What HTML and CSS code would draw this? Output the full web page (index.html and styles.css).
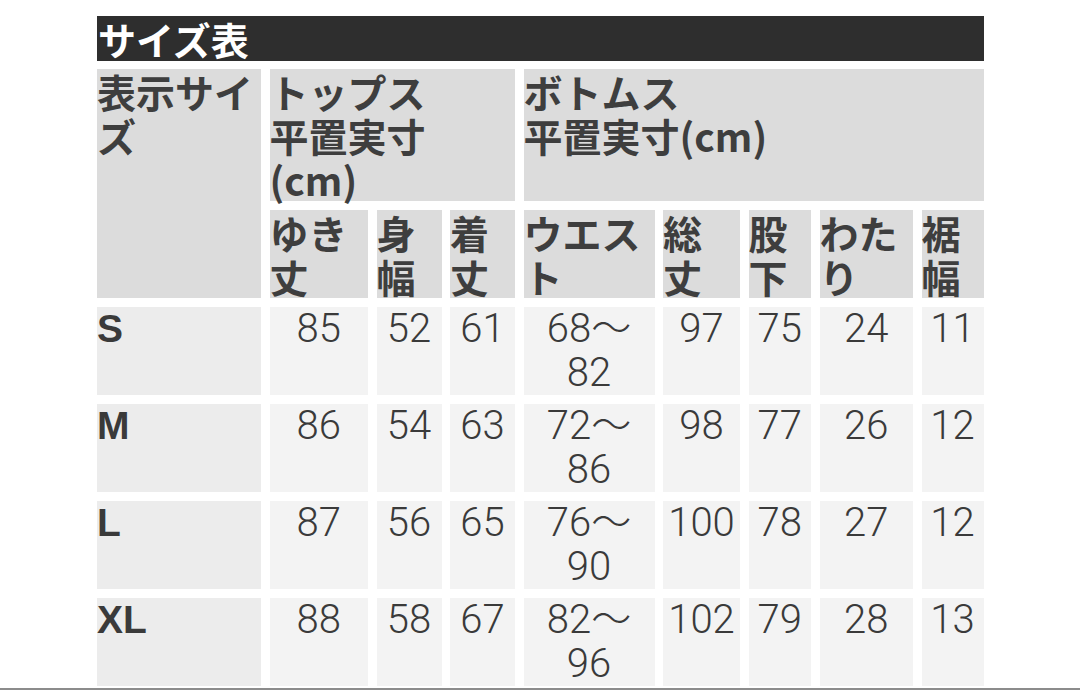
FILE: index.html
```html
<!DOCTYPE html>
<html lang="ja">
<head>
<meta charset="utf-8">
<title>サイズ表</title>
<link rel="stylesheet" href="styles.css">
</head>
<body>
<div class="page">
  <h2 class="title">サイズ表</h2>
  <div class="chart">
    <div class="cell head size-head">表示サイズ</div>
    <div class="cell head tops-head">トップス<br>平置実寸<br>(cm)</div>
    <div class="cell head bottoms-head">ボトムス<br>平置実寸(cm)</div>

    <div class="cell head">ゆき丈</div>
    <div class="cell head">身幅</div>
    <div class="cell head">着丈</div>
    <div class="cell head">ウエスト</div>
    <div class="cell head">総丈</div>
    <div class="cell head">股下</div>
    <div class="cell head">わたり</div>
    <div class="cell head">裾幅</div>

    <div class="cell size">S</div>
    <div class="cell num">85</div>
    <div class="cell num">52</div>
    <div class="cell num">61</div>
    <div class="cell num">68〜<br>82</div>
    <div class="cell num">97</div>
    <div class="cell num">75</div>
    <div class="cell num">24</div>
    <div class="cell num">11</div>

    <div class="cell size">M</div>
    <div class="cell num">86</div>
    <div class="cell num">54</div>
    <div class="cell num">63</div>
    <div class="cell num">72〜<br>86</div>
    <div class="cell num">98</div>
    <div class="cell num">77</div>
    <div class="cell num">26</div>
    <div class="cell num">12</div>

    <div class="cell size">L</div>
    <div class="cell num">87</div>
    <div class="cell num">56</div>
    <div class="cell num">65</div>
    <div class="cell num">76〜<br>90</div>
    <div class="cell num">100</div>
    <div class="cell num">78</div>
    <div class="cell num">27</div>
    <div class="cell num">12</div>

    <div class="cell size">XL</div>
    <div class="cell num">88</div>
    <div class="cell num">58</div>
    <div class="cell num">67</div>
    <div class="cell num">82〜<br>96</div>
    <div class="cell num">102</div>
    <div class="cell num">79</div>
    <div class="cell num">28</div>
    <div class="cell num">13</div>
  </div>
</div>
<div class="bottom-rule"></div>
</body>
</html>
```

FILE: styles.css
```css
html, body {
  margin: 0;
  padding: 0;
  background: #ffffff;
}

body {
  font-family: "Noto Sans CJK JP", "Noto Sans", sans-serif;
  color: #3c3c3c;
  width: 1080px;
  height: 690px;
  overflow: hidden;
}

.page {
  padding: 16px 0 0 97px;
  width: 887px;
}

.title {
  margin: 0 0 8px 0;
  height: 45px;
  background: #2e2e2e;
  color: #ffffff;
  font-size: 38px;
  font-weight: 700;
  line-height: 45px;
  padding-left: 1px;
}

.chart {
  display: grid;
  grid-template-columns: 164px 98.5px 65px 65px 131px 77px 62.5px 93.5px 62px;
  grid-template-rows: 132px repeat(5, 88px);
  column-gap: 8.5px;
  row-gap: 9px;
  font-size: 39px;
  line-height: 44px;
}

.head {
  background: #dcdcdc;
  font-weight: 700;
  color: #3e3e3e;
}

.size-head {
  grid-row: span 2;
}

.tops-head {
  grid-column: span 3;
}

.bottoms-head {
  grid-column: span 5;
}

.size {
  background: #ececec;
  font-family: "Liberation Sans", "Noto Sans CJK JP", sans-serif;
  font-weight: 700;
  font-size: 39px;
  color: #3a3a3a;
}

.num {
  background: #f3f3f3;
  font-family: Roboto, "Noto Sans CJK JP", sans-serif;
  font-weight: 300;
  text-align: center;
  font-size: 40px;
  color: #3a3a3a;
}

.bottom-rule {
  margin-top: 2px;
  border-top: 2px solid #8c8c8c;
  width: 1080px;
}
```
